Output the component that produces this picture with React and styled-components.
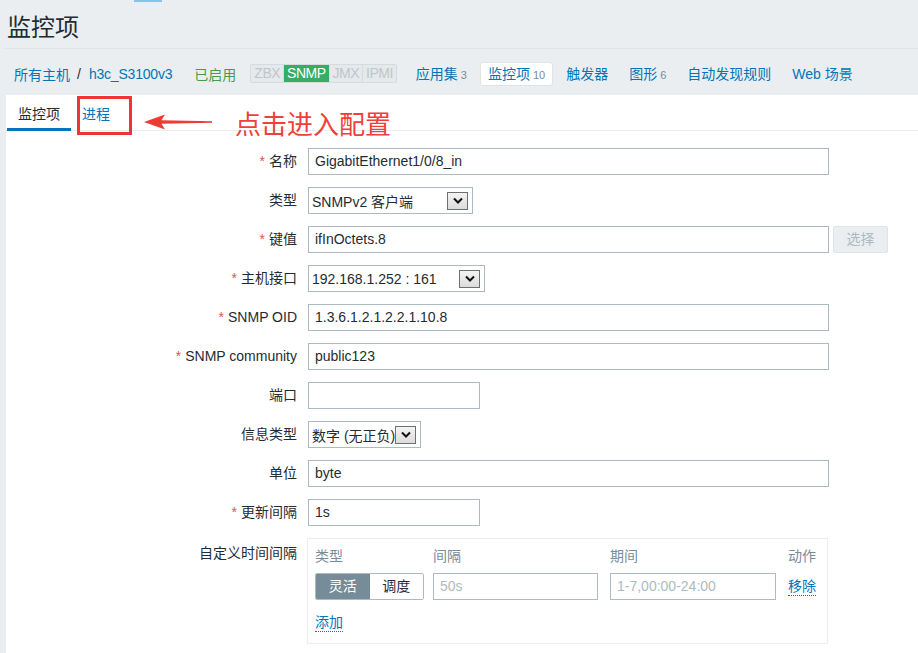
import styled, { createGlobalStyle } from 'styled-components';

const GlobalStyle = createGlobalStyle`
  body {
    margin: 0;
    background: #ebeef1;
    font-family: "Liberation Sans", Arial, "Noto Sans CJK SC", sans-serif;
    font-size: 14px;
    color: #1f2c33;
  }
  * { box-sizing: border-box; }
`

const Page = styled.div`
  padding-left: 6px;
  overflow: hidden;
`

const TopStrip = styled.div`
  height: 2px;
  span {
    display: block;
    margin-left: 128px;
    width: 28px;
    height: 2px;
    background: #7fc6ee;
  }
`

const Header = styled.div`
  height: 47px;
  margin-left: -1px;
  border-bottom: 1px solid #dfe4e7;
  display: flex;
  align-items: center;
  padding-left: 2px;
`

const Title = styled.h1`
  margin: 0;
  font-size: 24px;
  font-weight: normal;
  color: #1f2c33;
`

const Nav = styled.div`
  height: 46px;
  padding: 3px 0 0 8px;
  display: flex;
  align-items: center;
  white-space: nowrap;
`

const Crumb = styled.a`
  color: #0275b8;
  text-decoration: none;
  letter-spacing: ${p => (p.$tight ? '-0.2px' : '0')};
`

const Sep = styled.span`
  margin: 0 8px 0 7px;
  color: #1f2c33;
`

const Status = styled.span`
  color: #429e47;
  margin-left: 22px;
`

const Badges = styled.div`
  display: flex;
  margin: 0 11px 0 14px;
  border: 1px solid #d5dbde;
  border-radius: 2px;
  background: #e6e9eb;
  height: 19px;
`

const Badge = styled.span`
  padding: 0 3px;
  line-height: 17px;
  letter-spacing: -0.5px;
  color: ${p => (p.$on ? '#fff' : '#bec6ca')};
  background: ${p => (p.$on ? '#34ad65' : 'transparent')};
  border-left: 1px solid #d5dbde;
  &:first-child { border-left: none; }
`

const MenuList = styled.ul`
  list-style: none;
  margin: 0;
  padding: 0;
  display: flex;
  gap: 5px;
`

const MenuItem = styled.li`
  padding: 0 7px;
  height: 24px;
  line-height: 22px;
  border: 1px solid ${p => (p.$active ? '#dfe4e7' : 'transparent')};
  border-radius: 3px;
  background: ${p => (p.$active ? '#fff' : 'transparent')};
  color: #0275b8;
`

const Count = styled.sup`
  vertical-align: baseline;
  font-size: 11px;
  color: #768d99;
  margin-left: 3px;
`

const Panel = styled.div`
  position: relative;
  background: #fff;
  min-height: 560px;
`

const TabBar = styled.div`
  height: 36px;
  border-bottom: 1px solid #ebeef1;
  display: flex;
  padding-left: 1px;
`

const Tab = styled.div`
  position: relative;
  padding: 0 11px;
  display: flex;
  align-items: center;
  color: ${p => (p.$active ? '#1f2c33' : '#0275b8')};
  &::after {
    content: '';
    display: ${p => (p.$active ? 'block' : 'none')};
    position: absolute;
    left: 0;
    right: 0;
    bottom: -1px;
    height: 3px;
    background: #0275b8;
  }
`

const RedBox = styled.div`
  position: absolute;
  left: 71px;
  top: 1px;
  width: 55px;
  height: 39px;
  border: 3px solid #ee3434;
`

const Arrow = styled.svg`
  position: absolute;
  left: 138px;
  top: 19px;
`

const Note = styled.div`
  position: absolute;
  left: 229px;
  top: 11px;
  font-family: "Noto Sans CJK SC", sans-serif;
  font-size: 26px;
  line-height: 34px;
  color: #f0403a;
`

const Form = styled.div`
  display: grid;
  grid-template-columns: 291px 1fr;
  column-gap: 11px;
  row-gap: 12px;
  padding-top: 17px;
`

const Label = styled.div`
  text-align: right;
  line-height: 27px;
  white-space: nowrap;
  padding-top: ${p => (p.$top ? '2px' : '0')};
`

const Star = styled.span`
  color: #e05252;
  margin-right: 4px;
`

const Field = styled.div`
  display: flex;
  align-items: flex-start;
  gap: 4px;
`

const Input = styled.div`
  width: ${p => p.$w}px;
  height: 27px;
  border: 1px solid #acbbc2;
  padding-left: 6px;
  line-height: 25px;
  color: ${p => (p.$ph ? '#acbbc2' : '#1f2c33')};
  background: #fff;
  white-space: nowrap;
`

const SelectBox = styled.div`
  width: ${p => p.$w}px;
  height: 27px;
  border: 1px solid #acbbc2;
  padding: 0 4px 0 3px;
  display: flex;
  align-items: center;
  justify-content: space-between;
  white-space: nowrap;
`

const DropBtn = styled.span`
  width: 21px;
  height: 18px;
  border: 1px solid #6f6f6f;
  background: linear-gradient(#f4f4f4, #dcdcdc);
  display: flex;
  align-items: center;
  justify-content: center;
  flex: none;
`

const GrayButton = styled.div`
  width: 55px;
  height: 27px;
  border: 1px solid #dfe4e7;
  border-radius: 2px;
  background: #ebeef1;
  color: #acbbc2;
  text-align: center;
  line-height: 25px;
`

const IntervalBox = styled.div`
  width: 521px;
  margin-left: -1px;
  border: 1px solid #ebeef1;
  padding: 6px 7px 11px 7px;
`

const IntervalGrid = styled.div`
  display: grid;
  grid-template-columns: 118px 177px 178px auto;
  row-gap: 6px;
`

const ColHead = styled.div`
  line-height: 22px;
  color: #768d99;
`

const Segmented = styled.div`
  display: flex;
  width: 109px;
  height: 27px;
  border: 1px solid #acbbc2;
  border-radius: 2px;
  overflow: hidden;
`

const Seg = styled.div`
  flex: 1;
  text-align: center;
  line-height: 25px;
  background: ${p => (p.$on ? '#768d99' : '#fff')};
  color: ${p => (p.$on ? '#fff' : '#1f2c33')};
`

const DotLink = styled.a`
  display: inline-block;
  color: #0275b8;
  text-decoration: none;
  border-bottom: 1px dotted #0275b8;
  line-height: 18px;
`

const LinkCell = styled.div`
  padding-top: 4px;
`

const AddRow = styled.div`
  margin-top: 13px;
`

const Chevron = () => (
  <svg width="12" height="8" viewBox="0 0 12 8">
    <polyline points="2,1.5 6,5.5 10,1.5" fill="none" stroke="#111" strokeWidth="2" />
  </svg>
)

const Select = ({ w, children }) => (
  <SelectBox $w={w}>
    <span>{children}</span>
    <DropBtn><Chevron /></DropBtn>
  </SelectBox>
)

const Req = ({ children }) => (
  <Label><Star>*</Star>{children}</Label>
)

export default function App() {
  return (
    <Page>
      <GlobalStyle />
      <TopStrip><span /></TopStrip>
      <Header><Title>监控项</Title></Header>
      <Nav>
        <Crumb>所有主机</Crumb>
        <Sep>/</Sep>
        <Crumb $tight>h3c_S3100v3</Crumb>
        <Status>已启用</Status>
        <Badges>
          <Badge>ZBX</Badge>
          <Badge $on>SNMP</Badge>
          <Badge>JMX</Badge>
          <Badge>IPMI</Badge>
        </Badges>
        <MenuList>
          <MenuItem>应用集<Count>3</Count></MenuItem>
          <MenuItem $active>监控项<Count>10</Count></MenuItem>
          <MenuItem>触发器</MenuItem>
          <MenuItem>图形<Count>6</Count></MenuItem>
          <MenuItem>自动发现规则</MenuItem>
          <MenuItem>Web 场景</MenuItem>
        </MenuList>
      </Nav>
      <Panel>
        <TabBar>
          <Tab $active>监控项</Tab>
          <Tab>进程</Tab>
        </TabBar>
        <RedBox />
        <Arrow width="70" height="16" viewBox="0 0 70 16">
          <path d="M0,8 L21,0.5 L17.5,6.3 L68,7.2 L68,8.8 L17.5,9.7 L21,15.5 Z" fill="#ee3b35" />
        </Arrow>
        <Note>点击进入配置</Note>

        <Form>
          <Req>名称</Req>
          <Field><Input $w={521}>GigabitEthernet1/0/8_in</Input></Field>

          <Label>类型</Label>
          <Field><Select w={165}>SNMPv2 客户端</Select></Field>

          <Req>键值</Req>
          <Field>
            <Input $w={521}>ifInOctets.8</Input>
            <GrayButton>选择</GrayButton>
          </Field>

          <Req>主机接口</Req>
          <Field><Select w={177}>192.168.1.252 : 161</Select></Field>

          <Req>SNMP OID</Req>
          <Field><Input $w={521}>1.3.6.1.2.1.2.2.1.10.8</Input></Field>

          <Req>SNMP community</Req>
          <Field><Input $w={521}>public123</Input></Field>

          <Label>端口</Label>
          <Field><Input $w={172} /></Field>

          <Label>信息类型</Label>
          <Field><Select w={113}>数字 (无正负)</Select></Field>

          <Label>单位</Label>
          <Field><Input $w={521}>byte</Input></Field>

          <Req>更新间隔</Req>
          <Field><Input $w={172}>1s</Input></Field>

          <Label $top>自定义时间间隔</Label>
          <Field>
            <IntervalBox>
              <IntervalGrid>
                <ColHead>类型</ColHead>
                <ColHead>间隔</ColHead>
                <ColHead>期间</ColHead>
                <ColHead>动作</ColHead>

                <Segmented>
                  <Seg $on>灵活</Seg>
                  <Seg>调度</Seg>
                </Segmented>
                <Input $w={165} $ph>50s</Input>
                <Input $w={166} $ph>1-7,00:00-24:00</Input>
                <LinkCell><DotLink>移除</DotLink></LinkCell>
              </IntervalGrid>
              <AddRow><DotLink>添加</DotLink></AddRow>
            </IntervalBox>
          </Field>
        </Form>
      </Panel>
    </Page>
  );
}
